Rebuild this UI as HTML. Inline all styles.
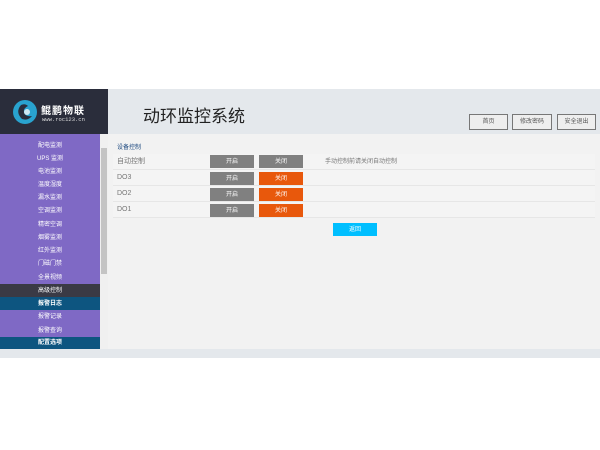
<!DOCTYPE html>
<html><head><meta charset="utf-8"><style>
*{margin:0;padding:0;box-sizing:border-box}
body{width:600px;height:450px;background:#fff;position:relative;font-family:"Liberation Sans","Noto Sans CJK SC",sans-serif;overflow:hidden}
.a{position:absolute}
.logo{left:0;top:89px;width:108px;height:45px;background:#2a2d3b}
.hdr{left:108px;top:89px;width:492px;height:45px;background:#e4e8ec}
.side{left:0;top:134px;width:100px;height:215px;background:#7f69c5}
.sb{left:100px;top:134px;width:8px;height:215px;background:#f0f0f0}
.main{left:108px;top:134px;width:492px;height:215px;background:#f2f2f2}
.foot{left:0;top:349px;width:600px;height:9px;background:#e4e8ec}
.mi,.tb,.btn{display:flex;align-items:center;justify-content:center;line-height:1}
.mi{position:absolute;left:0;width:100px;height:13px;color:#fff;font-size:6px}
.tb{position:absolute;top:114px;height:16px;border:1px solid #777;background:#eee;font-size:6px;color:#555}
.row{position:absolute;left:113px;width:482px;height:16px;border-bottom:1px solid #e6e6e6;background:#f4f4f4;font-size:7px;color:#777;line-height:16px;padding-left:4px}
.btn{position:absolute;width:44px;height:13px;color:#fff;font-size:6px}
.g{background:#808080}.o{background:#e8580c}
</style></head><body>
<div class="a logo">
<svg class="a" style="left:12px;top:10px" width="26" height="26" viewBox="0 0 26 26"><circle cx="13" cy="13" r="12" fill="#29a3cf"/><path d="M9 6 Q3 13 10 20 Q16 22 20 17 Q14 18 12 14 Q11 9 16 7 Q13 4 9 6Z" fill="#2a2d3b"/><circle cx="15" cy="13" r="3" fill="#cfe8f2"/></svg>
<div class="a" style="left:41px;top:13px;color:#fff;font-size:10px;font-weight:bold;letter-spacing:1px">鲲鹏物联</div>
<div class="a" style="left:42px;top:27px;color:#ddd;font-size:5.5px;font-family:'Liberation Mono',monospace">www.roc123.cn</div>
</div>
<div class="a hdr"><div class="a" style="left:35px;top:13px;font-size:17px;color:#222">动环监控系统</div></div>
<div class="tb" style="left:469px;width:39px">首页</div>
<div class="tb" style="left:512px;width:40px">修改密码</div>
<div class="tb" style="left:557px;width:39px">安全退出</div>
<div class="a side">
<div class="mi" style="top:5px">配电监测</div>
<div class="mi" style="top:18px">UPS 监测</div>
<div class="mi" style="top:31px">电池监测</div>
<div class="mi" style="top:44px">温度湿度</div>
<div class="mi" style="top:57px">漏水监测</div>
<div class="mi" style="top:70px">空调监测</div>
<div class="mi" style="top:84px">精密空调</div>
<div class="mi" style="top:97px">烟雾监测</div>
<div class="mi" style="top:110px">红外监测</div>
<div class="mi" style="top:123px">门磁门禁</div>
<div class="mi" style="top:137px">全景视频</div>
<div class="mi" style="top:150px;background:#3a3a45">高级控制</div>
<div class="mi" style="top:163px;background:#0d5580;font-weight:bold">报警日志</div>
<div class="mi" style="top:176px">报警记录</div>
<div class="mi" style="top:190px">报警查询</div>
<div class="mi" style="top:203px;background:#0d5580;font-weight:bold;height:12px">配置选项</div>
</div>
<div class="a sb"><div class="a" style="left:1px;top:14px;width:6px;height:126px;background:#c4c4c4"></div></div>
<div class="a main"></div>
<div class="a" style="left:117px;top:142px;font-size:6px;color:#1e4a80">设备控制</div>
<div class="row" style="top:154px">自动控制<span style="position:absolute;left:212px;font-size:6px">手动控制前请关闭自动控制</span></div>
<div class="row" style="top:170px">DO3</div>
<div class="row" style="top:186px">DO2</div>
<div class="row" style="top:202px">DO1</div>
<div class="btn g" style="left:210px;top:155px">开启</div><div class="btn g" style="left:259px;top:155px">关闭</div>
<div class="btn g" style="left:210px;top:172px">开启</div><div class="btn o" style="left:259px;top:172px">关闭</div>
<div class="btn g" style="left:210px;top:188px">开启</div><div class="btn o" style="left:259px;top:188px">关闭</div>
<div class="btn g" style="left:210px;top:204px">开启</div><div class="btn o" style="left:259px;top:204px">关闭</div>
<div class="btn" style="left:333px;top:223px;background:#00bfff">返回</div>
<div class="a foot"></div>
</body></html>
